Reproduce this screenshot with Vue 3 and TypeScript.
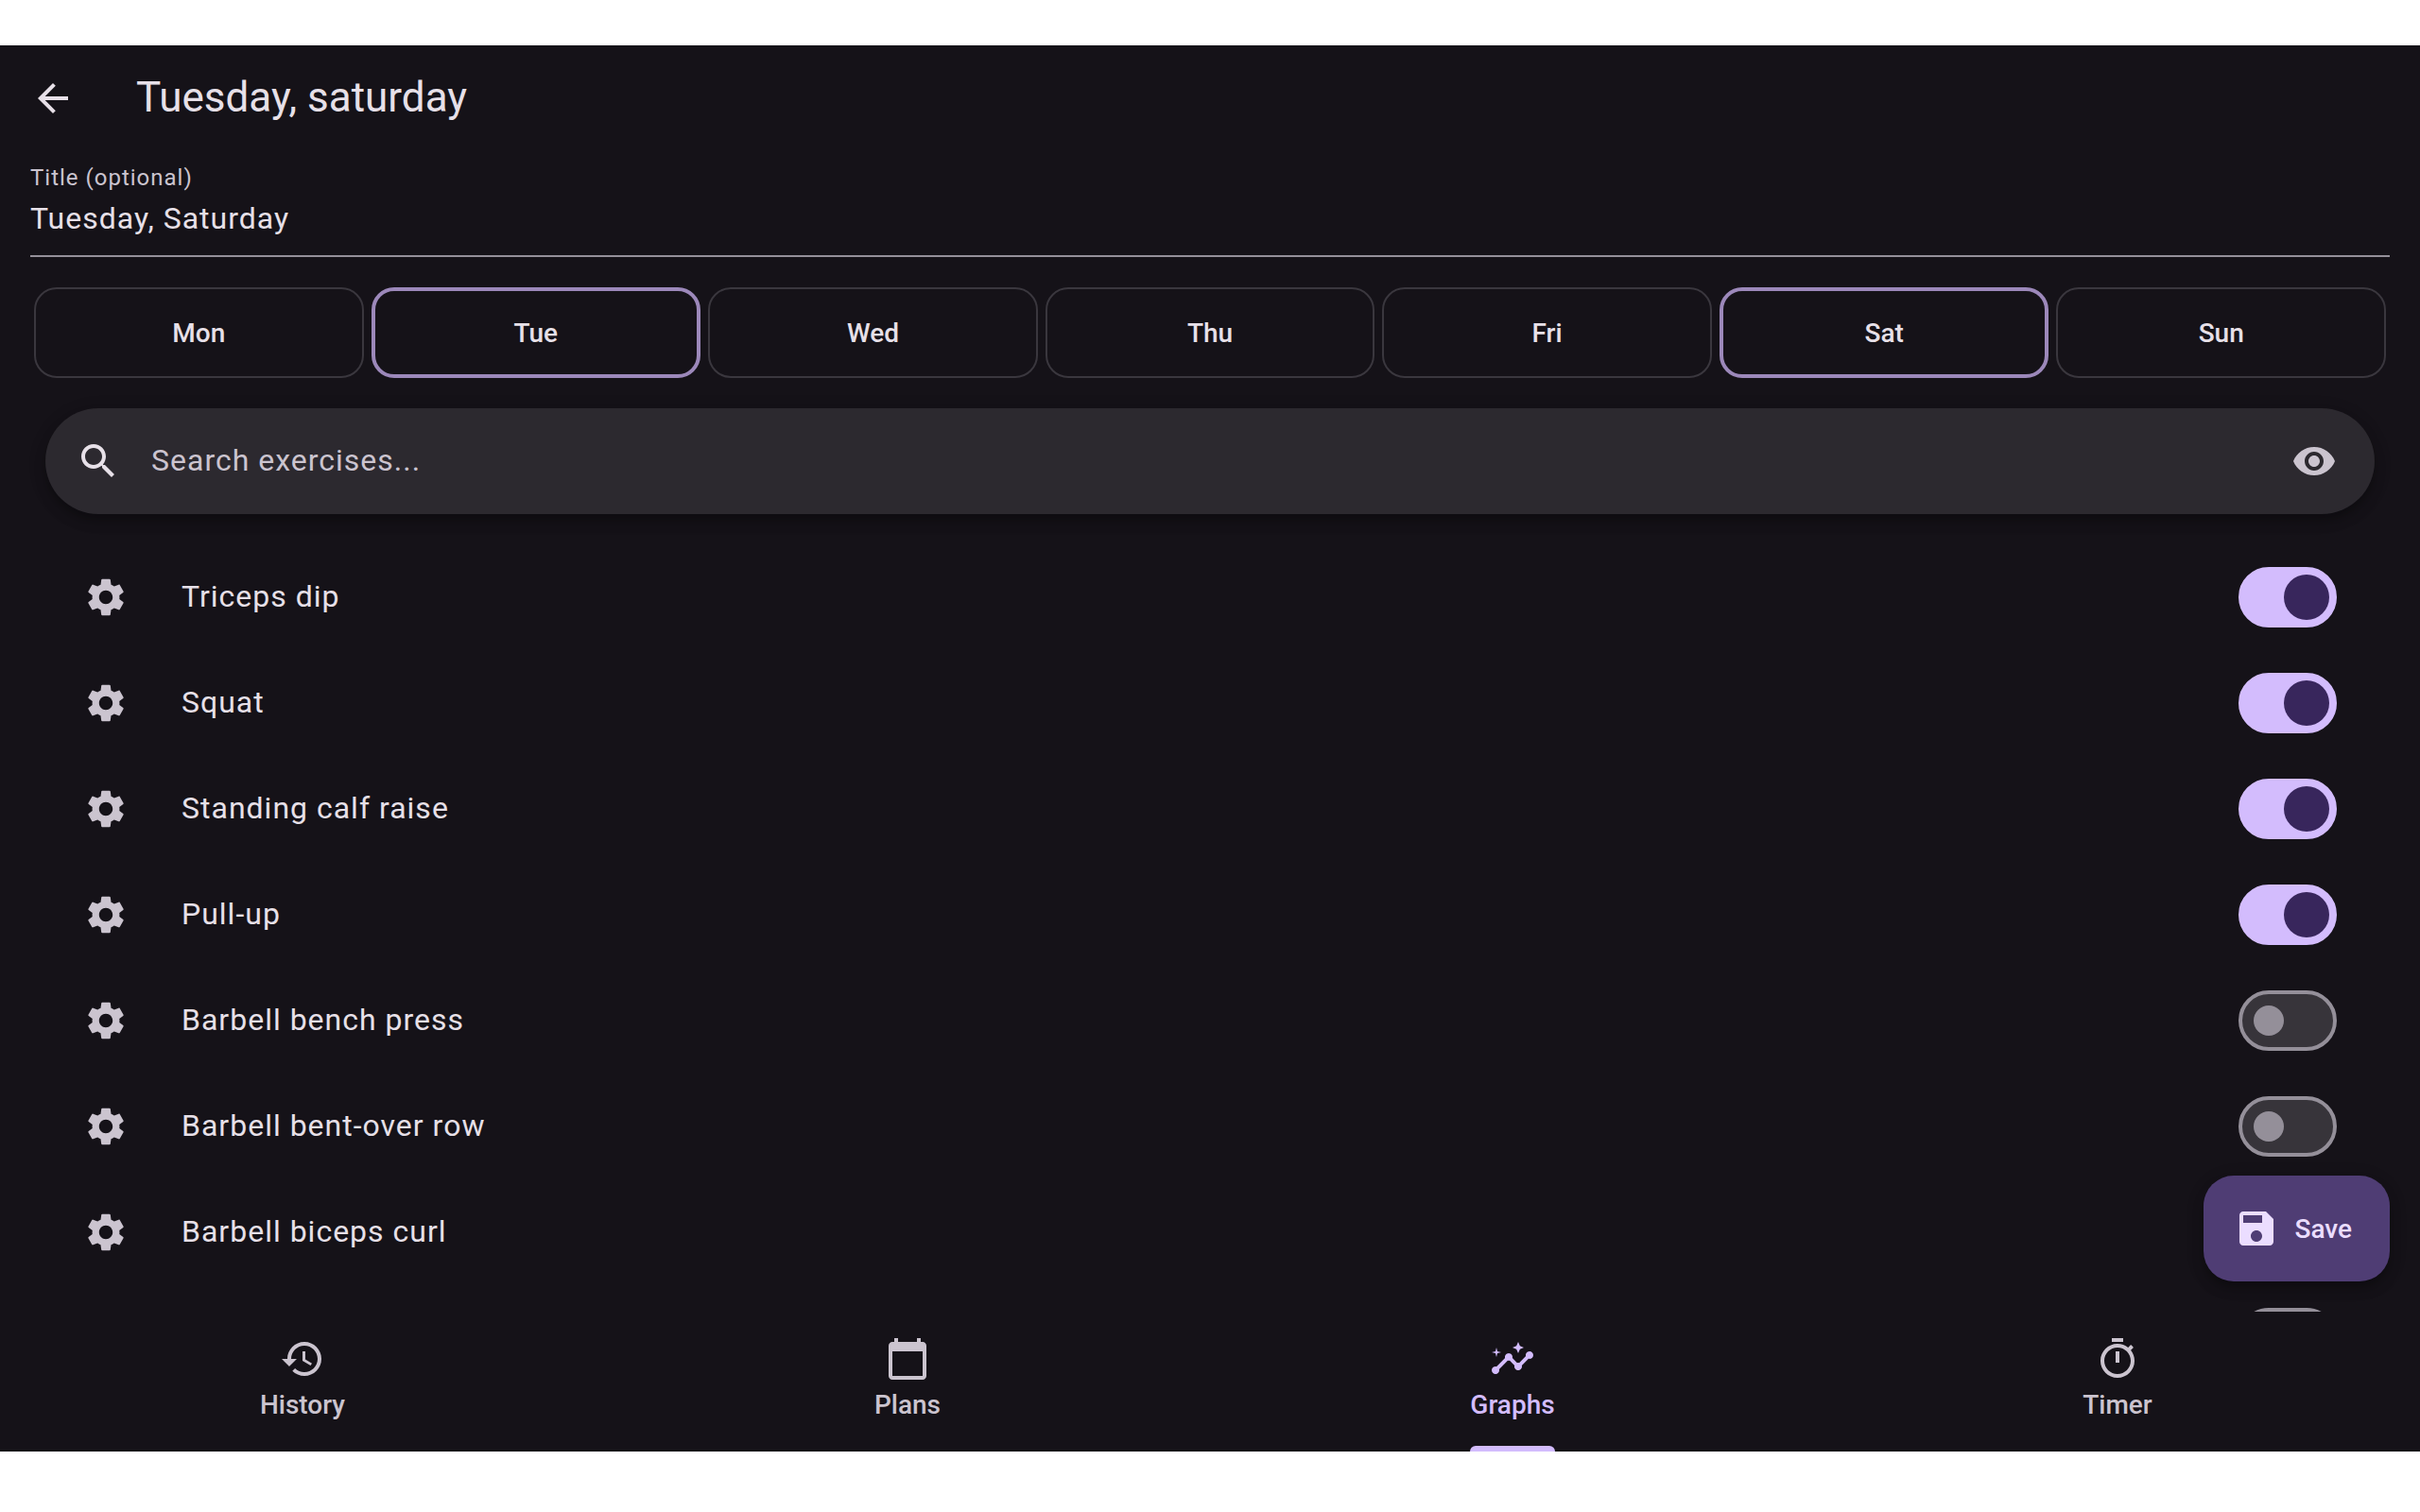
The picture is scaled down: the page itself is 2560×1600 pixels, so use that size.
<script setup lang="ts">
import { computed, ref } from 'vue'

interface Day {
  name: string
  selected: boolean
}

interface Exercise {
  name: string
  enabled: boolean
}

interface Tab {
  label: string
  icon: string
}

const icons = {
  back: 'M20 11H7.83l5.59-5.59L12 4l-8 8 8 8 1.41-1.41L7.83 13H20v-2z',
  search:
    'M15.5 14h-.79l-.28-.27C15.41 12.59 16 11.11 16 9.5 16 5.91 13.09 3 9.5 3S3 5.91 3 9.5 5.91 16 9.5 16c1.61 0 3.09-.59 4.23-1.57l.27.28v.79l5 4.99L20.49 19l-4.99-5zm-6 0C7.01 14 5 11.99 5 9.5S7.01 5 9.5 5 14 7.01 14 9.5 11.99 14 9.5 14z',
  visibility:
    'M12 4.5C7 4.5 2.73 7.61 1 12c1.73 4.39 6 7.5 11 7.5s9.27-3.11 11-7.5c-1.73-4.39-6-7.5-11-7.5zM12 17c-2.76 0-5-2.24-5-5s2.24-5 5-5 5 2.24 5 5-2.24 5-5 5zm0-8c-1.66 0-3 1.34-3 3s1.34 3 3 3 3-1.34 3-3-1.34-3-3-3z',
  settings:
    'M19.14 12.94c.04-.3.06-.61.06-.94 0-.32-.02-.64-.07-.94l2.03-1.58c.18-.14.23-.41.12-.61l-1.92-3.32c-.12-.22-.37-.29-.59-.22l-2.39.96c-.5-.38-1.03-.7-1.62-.94l-.36-2.54c-.04-.24-.24-.41-.48-.41h-3.84c-.24 0-.43.17-.47.41l-.36 2.54c-.59.24-1.13.57-1.62.94l-2.39-.96c-.22-.08-.47 0-.59.22L2.74 8.87c-.12.21-.08.47.12.61l2.03 1.58c-.05.3-.09.63-.09.94s.02.64.07.94l-2.03 1.58c-.18.14-.23.41-.12.61l1.92 3.32c.12.22.37.29.59.22l2.39-.96c.5.38 1.03.7 1.62.94l.36 2.54c.05.24.24.41.48.41h3.84c.24 0 .44-.17.47-.41l.36-2.54c.59-.24 1.13-.56 1.62-.94l2.39.96c.22.08.47 0 .59-.22l1.92-3.32c.12-.22.07-.47-.12-.61l-2.01-1.58zM12 15.6c-1.98 0-3.6-1.62-3.6-3.6s1.62-3.6 3.6-3.6 3.6 1.62 3.6 3.6-1.62 3.6-3.6 3.6z',
  save: 'M17 3H5c-1.11 0-2 .9-2 2v14c0 1.1.89 2 2 2h14c1.1 0 2-.9 2-2V7l-4-4zm-5 16c-1.66 0-3-1.34-3-3s1.34-3 3-3 3 1.34 3 3-1.34 3-3 3zm3-10H5V5h10v4z',
  history:
    'M13 3c-4.97 0-9 4.03-9 9H1l3.89 3.89.07.14L9 12H6c0-3.87 3.13-7 7-7s7 3.13 7 7-3.13 7-7 7c-1.93 0-3.68-.79-4.94-2.06l-1.42 1.42C8.27 19.99 10.51 21 13 21c4.97 0 9-4.03 9-9s-4.03-9-9-9zm-1 5v5l4.28 2.54.72-1.21-3.5-2.08V8H12z',
  calendar:
    'M20 3h-1V1h-2v2H7V1H5v2H4c-1.1 0-2 .9-2 2v16c0 1.1.9 2 2 2h16c1.1 0 2-.9 2-2V5c0-1.1-.9-2-2-2zm0 18H4V8h16v13z',
  insights:
    'M21 8c-1.45 0-2.26 1.44-1.93 2.51l-3.55 3.56c-.3-.09-.74-.09-1.04 0l-2.55-2.55C12.27 10.45 11.46 9 10 9c-1.45 0-2.27 1.44-1.93 2.52l-4.56 4.55C2.44 15.74 1 16.55 1 18c0 1.1.9 2 2 2 1.45 0 2.26-1.44 1.93-2.51l4.55-4.56c.3.09.74.09 1.04 0l2.55 2.55C12.73 16.55 13.54 18 15 18c1.45 0 2.27-1.44 1.93-2.52l3.56-3.55C21.56 12.26 23 11.45 23 10c0-1.1-.9-2-2-2zM15 9l.94-2.07L18 6l-2.06-.93L15 3l-.92 2.07L12 6l2.08.93L15 9zM3.5 11L4 9l2-.5L4 8l-.5-2L3 8l-2 .5L3 9l.5 2z',
  timer:
    'M15 1H9v2h6V1zm-4 13h2V8h-2v6zm8.03-6.61l1.42-1.42c-.43-.51-.9-.99-1.41-1.41l-1.42 1.42C16.07 4.74 14.12 4 12 4c-4.97 0-9 4.03-9 9s4.02 9 9 9 9-4.03 9-9c0-2.12-.74-4.07-1.97-5.61zM12 20c-3.87 0-7-3.13-7-7s3.13-7 7-7 7 3.13 7 7-3.13 7-7 7z',
}

const title = ref('Tuesday, Saturday')
const heading = computed(() => title.value.charAt(0) + title.value.slice(1).toLowerCase())
const query = ref('')

const days = ref<Day[]>([
  { name: 'Mon', selected: false },
  { name: 'Tue', selected: true },
  { name: 'Wed', selected: false },
  { name: 'Thu', selected: false },
  { name: 'Fri', selected: false },
  { name: 'Sat', selected: true },
  { name: 'Sun', selected: false },
])

const exercises = ref<Exercise[]>([
  { name: 'Triceps dip', enabled: true },
  { name: 'Squat', enabled: true },
  { name: 'Standing calf raise', enabled: true },
  { name: 'Pull-up', enabled: true },
  { name: 'Barbell bench press', enabled: false },
  { name: 'Barbell bent-over row', enabled: false },
  { name: 'Barbell biceps curl', enabled: false },
  { name: '', enabled: false },
])

const tabs: Tab[] = [
  { label: 'History', icon: icons.history },
  { label: 'Plans', icon: icons.calendar },
  { label: 'Graphs', icon: icons.insights },
  { label: 'Timer', icon: icons.timer },
]
const activeTab = ref('Graphs')
</script>

<template>
  <div class="screen">
    <div class="app">
      <header class="app-bar">
        <button class="icon-button" type="button" aria-label="Back">
          <svg class="icon" viewBox="0 0 24 24"><path :d="icons.back" /></svg>
        </button>
        <h1 class="heading">{{ heading }}</h1>
      </header>

      <main class="body">
        <div class="field">
          <label class="field-label" for="plan-title">Title (optional)</label>
          <input id="plan-title" v-model="title" class="field-input" type="text" />
        </div>

        <div class="days">
          <button
            v-for="day in days"
            :key="day.name"
            class="day"
            :class="{ selected: day.selected }"
            type="button"
            :aria-pressed="day.selected"
            @click="day.selected = !day.selected"
          >
            {{ day.name }}
          </button>
        </div>

        <div class="search">
          <label class="search-label" for="search" aria-label="Search exercises">
            <svg class="icon" viewBox="0 0 24 24"><path :d="icons.search" /></svg>
          </label>
          <input
            id="search"
            v-model="query"
            class="search-input"
            type="text"
            placeholder="Search exercises..."
          />
          <button class="icon-button muted" type="button" aria-label="Show selected">
            <svg class="icon" viewBox="0 0 24 24"><path :d="icons.visibility" /></svg>
          </button>
        </div>

        <ul class="exercises">
          <li v-for="(exercise, index) in exercises" :key="index" class="exercise">
            <button class="icon-button muted" type="button" aria-label="Settings">
              <svg class="icon" viewBox="0 0 24 24"><path :d="icons.settings" /></svg>
            </button>
            <label class="exercise-name" :for="`exercise-${index}`">{{ exercise.name }}</label>
            <input
              :id="`exercise-${index}`"
              v-model="exercise.enabled"
              class="switch"
              type="checkbox"
              role="switch"
            />
          </li>
        </ul>

        <button class="save" type="button">
          <svg class="icon" viewBox="0 0 24 24"><path :d="icons.save" /></svg>
          <span>Save</span>
        </button>
      </main>

      <nav class="tabs">
        <button
          v-for="tab in tabs"
          :key="tab.label"
          class="tab"
          :class="{ active: tab.label === activeTab }"
          type="button"
          @click="activeTab = tab.label"
        >
          <span class="tab-content">
            <svg class="icon" viewBox="0 0 24 24"><path :d="tab.icon" /></svg>
            <span class="tab-label">{{ tab.label }}</span>
          </span>
        </button>
      </nav>
    </div>
  </div>
</template>

<style>
body {
  margin: 0;
  background: #ffffff;
}
</style>

<style scoped>
.screen {
  --surface: #151218;
  --surface-high: #2c292f;
  --surface-highest: #37343a;
  --on-surface: #e7e0e8;
  --on-surface-variant: #cbc4cf;
  --outline: #948f99;
  --primary: #d3bcfd;
  --on-primary: #38265c;
  --shadow: 0 8px 12px rgba(0, 0, 0, 0.25), 0 4px 20px rgba(0, 0, 0, 0.12);
  display: flex;
  flex-direction: column;
  box-sizing: border-box;
  height: 100vh;
  padding: 48px 0 64px;
  font-family: Roboto, 'Liberation Sans', sans-serif;
  color: var(--on-surface);
}

button,
input {
  box-sizing: border-box;
  margin: 0;
  padding: 0;
  border: none;
  outline: none;
  background: none;
  font: inherit;
  color: inherit;
}

button {
  cursor: pointer;
}

.app {
  display: flex;
  flex: 1;
  flex-direction: column;
  min-height: 0;
  background: var(--surface);
}

.icon {
  display: block;
  flex: none;
  width: 48px;
  height: 48px;
  fill: currentColor;
}

.icon-button {
  flex: none;
}

.muted {
  color: var(--on-surface-variant);
}

.app-bar {
  display: flex;
  align-items: center;
  gap: 64px;
  height: 112px;
  padding: 0 32px;
}

.heading {
  margin: 0;
  padding-bottom: 2px;
  font-size: 44px;
  font-weight: 400;
  line-height: 56px;
}

.body {
  position: relative;
  display: flex;
  flex: 1;
  flex-direction: column;
  min-height: 0;
}

.field {
  display: flex;
  flex-direction: column;
  gap: 8px;
  margin: 0 32px;
  padding: 16px 0;
  border-bottom: 2px solid var(--outline);
}

.field-label {
  font-size: 24px;
  line-height: 24px;
  letter-spacing: 1px;
  color: var(--on-surface-variant);
}

.field-input {
  height: 46px;
  font-size: 32px;
  letter-spacing: 1px;
}

.days {
  display: grid;
  grid-template-columns: repeat(7, 1fr);
  gap: 8px;
  margin: 32px 36px;
}

.day {
  height: 96px;
  border: 2px solid #3a373e;
  border-radius: 24px;
  font-size: 28px;
  font-weight: 500;
}

.day.selected {
  border: 4px solid #9c88ba;
}

.search {
  display: flex;
  align-items: center;
  gap: 32px;
  height: 112px;
  box-sizing: border-box;
  margin: 0 48px;
  padding: 0 40px 0 32px;
  border-radius: 56px;
  background: var(--surface-high);
  box-shadow: var(--shadow);
}

.search-input {
  flex: 1;
  min-width: 0;
  height: 48px;
  padding-bottom: 2px;
  font-size: 32px;
  letter-spacing: 1px;
}

.search-input::placeholder {
  color: var(--on-surface-variant);
  opacity: 1;
}

.exercises {
  flex: 1;
  min-height: 0;
  margin: 32px 0 0;
  padding: 0 88px;
  overflow: hidden auto;
  scrollbar-width: none;
  list-style: none;
}

.exercise {
  display: flex;
  align-items: center;
  gap: 56px;
  height: 112px;
}

.exercise-name {
  flex: 1;
  padding-bottom: 2px;
  font-size: 32px;
  line-height: 48px;
  letter-spacing: 1px;
}

.switch {
  flex: none;
  width: 104px;
  height: 64px;
  border: 4px solid var(--outline);
  border-radius: 32px;
  background: var(--surface-highest);
  appearance: none;
  cursor: pointer;
}

.switch::before {
  display: block;
  width: 32px;
  height: 32px;
  margin: 12px;
  border-radius: 50%;
  background: var(--outline);
  content: '';
}

.switch:checked {
  border-color: var(--primary);
  background: var(--primary);
}

.switch:checked::before {
  width: 48px;
  height: 48px;
  margin: 4px 4px 4px 44px;
  background: var(--on-primary);
}

.save {
  position: absolute;
  right: 32px;
  bottom: 32px;
  display: flex;
  align-items: center;
  gap: 16px;
  height: 112px;
  padding: 0 40px 0 32px;
  border-radius: 32px;
  background: #4f3d74;
  box-shadow: var(--shadow);
  font-size: 28px;
  font-weight: 500;
  color: #ebddff;
}

.tabs {
  display: flex;
}

.tab {
  display: flex;
  flex: 1;
  justify-content: center;
  height: 148px;
  color: var(--on-surface-variant);
}

.tab-content {
  display: flex;
  flex-direction: column;
  align-items: center;
  gap: 4px;
  box-sizing: border-box;
  height: 148px;
  padding-top: 26px;
}

.tab-label {
  font-size: 28px;
  font-weight: 500;
  line-height: 42px;
}

.tab.active {
  color: var(--primary);
}

.tab.active .tab-content::after {
  width: 100%;
  height: 6px;
  margin-top: auto;
  border-radius: 6px 6px 0 0;
  background: var(--primary);
  content: '';
}
</style>
